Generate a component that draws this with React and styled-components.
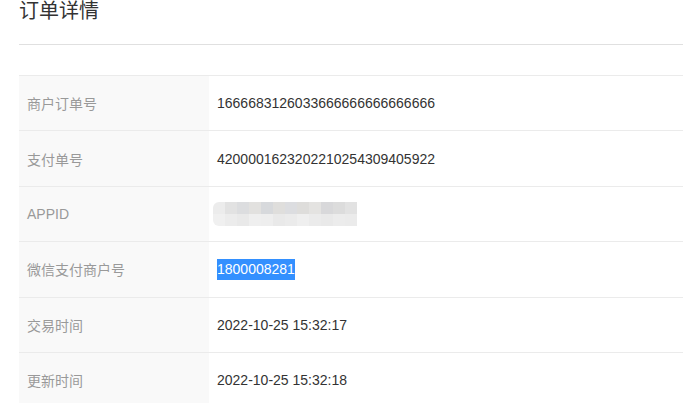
import React from 'react'
import styled, { createGlobalStyle } from 'styled-components'

const Global = createGlobalStyle`
  html, body {
    margin: 0;
    padding: 0;
    background: #fff;
  }
  body {
    font-family: "Liberation Sans", Arial, "Noto Sans CJK SC", sans-serif;
    overflow: hidden;
  }
`

const Page = styled.div`
  padding-left: 19px;
`

const Header = styled.div`
  height: 44px;
  border-bottom: 1px solid #e0e0e0;
  box-sizing: content-box;
`

const Title = styled.h1`
  margin: 0;
  font-size: 20px;
  line-height: 20px;
  font-weight: normal;
  color: #333;
  font-family: "Noto Sans CJK SC", sans-serif;
`

const Table = styled.div`
  margin-top: 30px;
  border-top: 1px solid #ebebeb;
`

const Row = styled.div`
  display: grid;
  grid-template-columns: 190px 1fr;
  height: 55.4px;
  box-sizing: border-box;
  border-bottom: 1px solid #ebebeb;
`

const Label = styled.div`
  background: #f9f9f9;
  color: #999;
  font-size: 14px;
  padding-left: 8px;
  display: flex;
  align-items: center;
  font-family: "Liberation Sans", "Noto Sans CJK SC", sans-serif;
`

const Value = styled.div`
  color: #333;
  font-size: 14px;
  padding-left: 8px;
  display: flex;
  align-items: center;
`

const Selected = styled.span`
  background: #3390ff;
  color: #fff;
  line-height: 21px;
  display: inline-block;
`

const Mosaic = styled.div`
  display: grid;
  grid-template-columns: repeat(12, 12px);
  grid-template-rows: 12px 12px;
  margin-left: -4px;
  border-radius: 6px 0 0 6px;
  overflow: hidden;
`

const Cell = styled.div`
  background: ${p => p.c};
`

const mosaicTop = ['#ececec', '#e2e2e2', '#dcdddf', '#e2e1df', '#d7d9dc', '#dfdedc', '#dcdde0', '#dedddb', '#e4e3e1', '#d8d8da', '#dcdcdc', '#e2e2e2']
const mosaicBottom = ['#f0f0f0', '#ececec', '#e9e9e9', '#efefef', '#eeeeee', '#e9e9e9', '#ebebeb', '#efefef', '#ebebeb', '#e9e9e9', '#ececec', '#ebebeb']

const rows = [
  { label: '商户订单号', value: '1666683126033666666666666666' },
  { label: '支付单号', value: '4200001623202210254309405922' },
  { label: 'APPID', blur: true },
  { label: '微信支付商户号', value: '1800008281', selected: true },
  { label: '交易时间', value: '2022-10-25 15:32:17' },
  { label: '更新时间', value: '2022-10-25 15:32:18' }
]

export default function App() {
  return (
    <Page>
      <Global />
      <Header>
        <Title>订单详情</Title>
      </Header>
      <Table>
        {rows.map(r => (
          <Row key={r.label}>
            <Label>{r.label}</Label>
            <Value>
              {r.blur ? (
                <Mosaic>
                  {mosaicTop.map((c, i) => <Cell key={'t' + i} c={c} />)}
                  {mosaicBottom.map((c, i) => <Cell key={'b' + i} c={c} />)}
                </Mosaic>
              ) : r.selected ? (
                <Selected>{r.value}</Selected>
              ) : (
                r.value
              )}
            </Value>
          </Row>
        ))}
      </Table>
    </Page>
  )
}
